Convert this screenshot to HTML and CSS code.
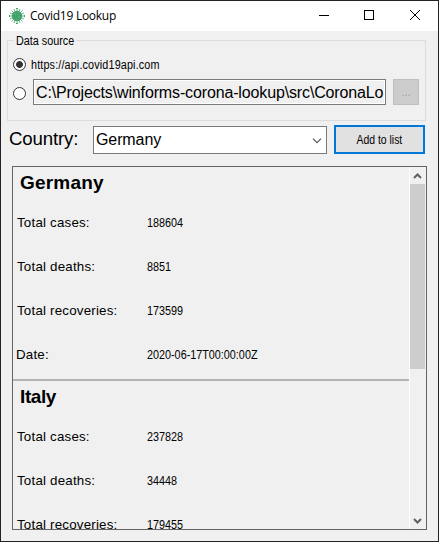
FILE: index.html
```
<!DOCTYPE html>
<html lang="en">
<head>
<meta charset="utf-8">
<title>Covid19 Lookup</title>
<link rel="stylesheet" href="styles.css">
</head>
<body>
<div class="window">
  <header class="titlebar">
    <svg class="logo" width="16" height="16" viewBox="0 0 16 16">
      <circle cx="8" cy="8" r="5.2" fill="#43a56c"/>
      <g stroke="#43a56c" stroke-width=".8" fill="none">
        <path d="M8 0.500V15.500M0 8H16M2.500 2.500L13.500 13.500M13.500 2.500L2.500 13.500M5 1L11 15M11 1L5 15M1 5L15 11M1 11L15 5"/>
      </g>
      <path d="M7 0.500H9M7 15.500H9M.5 7V9M15.500 7V9" stroke="#43a56c"/>
      <path d="M5 6h2M9 9h2M7 11h1M9 5h1" stroke="#58b47d"/>
    </svg>
    <span class="title">Covid19 Lookup</span>
    <svg class="controls" width="104" height="12" viewBox="0 0 104 12" fill="none" stroke="#000" shape-rendering="crispEdges">
      <path d="M1 6.500H11"/>
      <rect x="46.500" y="1.500" width="9" height="9"/>
      <path d="M92 1L102 11M102 1L92 11" shape-rendering="auto"/>
    </svg>
  </header>
  <section class="group">
    <span class="legend"><span class="small">Data source</span></span>
    <label class="option"><i class="radio on"></i><span class="small url">https://api.covid19api.com</span></label>
    <div class="option file"><i class="radio"></i><div class="path">C:\Projects\winforms-corona-lookup\src\CoronaLo</div><button class="browse"><span class="small">...</span></button></div>
  </section>
  <div class="picker">
    <span class="label">Country:</span>
    <div class="combo"><span>Germany</span>
      <svg width="10" height="6" viewBox="0 0 10 6" fill="none" stroke="#555" stroke-width="1.2"><path d="M1 .7L5 4.700L9 .7"/></svg>
    </div>
    <button class="add"><span class="small">Add to list</span></button>
  </div>
  <div class="list">
    <div class="cards">
      <article class="card">
        <h2>Germany</h2>
        <div class="row"><span class="key">Total cases:</span><span class="small">188604</span></div>
        <div class="row"><span class="key">Total deaths:</span><span class="small">8851</span></div>
        <div class="row"><span class="key">Total recoveries:</span><span class="small">173599</span></div>
        <div class="row"><span class="key date">Date:</span><span class="small">2020-06-17T00:00:00Z</span></div>
      </article>
      <article class="card">
        <h2 class="tight">Italy</h2>
        <div class="row"><span class="key">Total cases:</span><span class="small">237828</span></div>
        <div class="row"><span class="key">Total deaths:</span><span class="small">34448</span></div>
        <div class="row"><span class="key">Total recoveries:</span><span class="small">179455</span></div>
      </article>
    </div>
    <div class="scrollbar">
      <svg width="15" height="17" viewBox="0 0 15 17" fill="none" stroke="#606060" stroke-width="2"><path d="M4 11L7.500 7.500L11 11"/></svg>
      <div class="thumb"></div>
      <svg class="down" width="15" height="17" viewBox="0 0 15 17" fill="none" stroke="#606060" stroke-width="2"><path d="M4 7L7.500 10.500L11 7"/></svg>
    </div>
  </div>
</div>
</body>
</html>
```
FILE: styles.css
```
* { box-sizing: border-box; }
body { margin: 0; font-family: "Liberation Sans", sans-serif; color: #000; }
button { margin: 0; padding: 0; font-family: inherit; }
svg { display: block; flex: none; }

.window {
  width: 439px; height: 542px;
  display: flex; flex-direction: column;
  background: #f0f0f0; border: 1px solid #242226; overflow: hidden;
}
.titlebar {
  height: 30px; flex: none; display: flex; align-items: center;
  padding: 0 16px 0 8px; background: #fff;
}
.title {
  margin-left: 5px; font: 12px/16px "Open Sans", sans-serif;
  letter-spacing: -0.26px; white-space: nowrap;
}
.controls { margin: -2px 0 0 auto; }

.small {
  display: inline-block; font-size: 12px; line-height: 16px;
  white-space: nowrap; transform: scaleX(.9); transform-origin: 0 50%;
}
.url { letter-spacing: .16px; }

.group {
  position: relative; flex: none;
  width: 419px; height: 81px; margin: 9px 0 0 6px;
  padding: 16px 0 0 5px; border: 1px solid #dcdcdc;
}
.legend {
  position: absolute; left: 6px; top: -8px; width: 62px; height: 16px;
  padding-left: 2px; background: #f0f0f0; display: flex;
}
.option { display: flex; align-items: center; height: 16px; }
.option > .small { margin-left: 5px; }
.radio {
  width: 13px; height: 13px; flex: none; border: 1px solid #333;
  border-radius: 50%; background: #fff;
}
.radio.on { margin-top: -1px; background: radial-gradient(circle, #333 3px, #fff 3.800px); }
.file { height: 26px; margin-top: 6px; }
.file .radio { margin-top: 3px; }
.path {
  width: 353px; height: 26px; margin-left: 7px; padding-left: 2px;
  border: 1px solid #7a7a7a; box-shadow: inset 0 0 0 1px #fff;
  font-size: 16px; line-height: 25px; letter-spacing: -.14px;
  white-space: nowrap; overflow: hidden;
}
.browse {
  width: 26px; height: 26px; margin-left: 7px;
  background: #ccc; border: 1px solid #bfbfbf; color: #a0a0a0;
}
.browse .small { transform-origin: 50% 50%; }

.picker { display: flex; flex: none; height: 29px; margin: 4px 0 0 8px; }
.label { width: 84px; font-size: 18.670px; line-height: 28px; letter-spacing: -.15px; white-space: nowrap; }
.combo {
  width: 234px; height: 28px; margin-top: 1px; padding: 0 4px 0 2px;
  display: flex; align-items: center; justify-content: space-between;
  background: #fff; border: 1px solid #7a7a7a; font-size: 16px; line-height: 26px;
  letter-spacing: -.1px;
}
.combo svg { margin-top: 2px; }
.add {
  width: 91px; height: 29px; margin-left: 7px;
  background: #e1e1e1; border: 2px solid #0078d7; color: #000;
}
.add .small { transform: scaleX(.87); transform-origin: 50% 50%; }

.list {
  display: flex; flex: none; width: 415px; height: 364px; margin: 12px 0 0 11px;
  border: 1px solid #646464; overflow: hidden;
}
.cards { width: 396px; height: 362px; overflow: hidden; }
.card { height: 214px; padding-top: 4px; border-bottom: 2px solid #b4b4b4; }
.card h2 {
  height: 30px; margin: 0; padding-left: 7px;
  font-size: 19px; line-height: 24px; font-weight: bold; letter-spacing: .2px;
}
.card h2.tight { letter-spacing: -.4px; }
.row { display: flex; align-items: center; height: 44px; padding-left: 4px; }
.key { width: 130px; font-size: 13.330px; line-height: 16px; letter-spacing: .2px; white-space: nowrap; }
.key.date { margin-left: -1px; width: 131px; }
.scrollbar {
  width: 16px; height: 362px; border-left: 1px solid #fff;
  display: flex; flex-direction: column;
}
.thumb { width: 15px; height: 185px; background: #cdcdcd; }
.down { margin-top: auto; }
```
